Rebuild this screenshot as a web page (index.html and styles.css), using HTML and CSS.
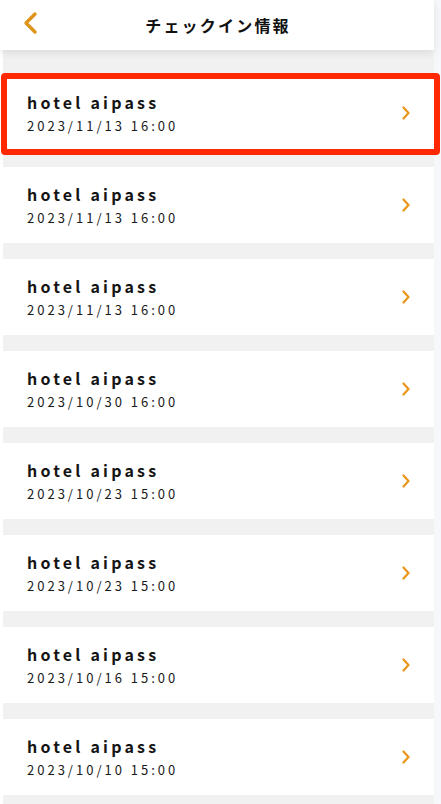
FILE: index.html
```html
<!DOCTYPE html>
<html lang="ja">
<head>
<meta charset="utf-8">
<title>チェックイン情報</title>
<link rel="stylesheet" href="styles.css">
</head>
<body>
<div class="app">
  <header class="header">
    <a class="back" aria-label="戻る">
      <svg width="16" height="24" viewBox="0 0 16 24"><path d="M13 3 L4 12 L13 21" fill="none" stroke="#de9419" stroke-width="3.4" stroke-linecap="round" stroke-linejoin="round"/></svg>
    </a>
    <h1 class="title">チェックイン情報</h1>
  </header>
  <main class="list">
    <div class="card selected">
      <div class="info"><div class="name">hotel aipass</div><div class="date">2023/11/13 16:00</div></div>
      <svg class="chev" width="10" height="14" viewBox="0 0 10 14"><path d="M2.5 1.5 L7.5 7 L2.5 12.5" fill="none" stroke="#e8961a" stroke-width="2.2" stroke-linecap="round" stroke-linejoin="round"/></svg>
      <span class="highlight"></span>
    </div>
    <div class="card">
      <div class="info"><div class="name">hotel aipass</div><div class="date">2023/11/13 16:00</div></div>
      <svg class="chev" width="10" height="14" viewBox="0 0 10 14"><path d="M2.5 1.5 L7.5 7 L2.5 12.5" fill="none" stroke="#e8961a" stroke-width="2.2" stroke-linecap="round" stroke-linejoin="round"/></svg>
    </div>
    <div class="card">
      <div class="info"><div class="name">hotel aipass</div><div class="date">2023/11/13 16:00</div></div>
      <svg class="chev" width="10" height="14" viewBox="0 0 10 14"><path d="M2.5 1.5 L7.5 7 L2.5 12.5" fill="none" stroke="#e8961a" stroke-width="2.2" stroke-linecap="round" stroke-linejoin="round"/></svg>
    </div>
    <div class="card">
      <div class="info"><div class="name">hotel aipass</div><div class="date">2023/10/30 16:00</div></div>
      <svg class="chev" width="10" height="14" viewBox="0 0 10 14"><path d="M2.5 1.5 L7.5 7 L2.5 12.5" fill="none" stroke="#e8961a" stroke-width="2.2" stroke-linecap="round" stroke-linejoin="round"/></svg>
    </div>
    <div class="card">
      <div class="info"><div class="name">hotel aipass</div><div class="date">2023/10/23 15:00</div></div>
      <svg class="chev" width="10" height="14" viewBox="0 0 10 14"><path d="M2.5 1.5 L7.5 7 L2.5 12.5" fill="none" stroke="#e8961a" stroke-width="2.2" stroke-linecap="round" stroke-linejoin="round"/></svg>
    </div>
    <div class="card">
      <div class="info"><div class="name">hotel aipass</div><div class="date">2023/10/23 15:00</div></div>
      <svg class="chev" width="10" height="14" viewBox="0 0 10 14"><path d="M2.5 1.5 L7.5 7 L2.5 12.5" fill="none" stroke="#e8961a" stroke-width="2.2" stroke-linecap="round" stroke-linejoin="round"/></svg>
    </div>
    <div class="card">
      <div class="info"><div class="name">hotel aipass</div><div class="date">2023/10/16 15:00</div></div>
      <svg class="chev" width="10" height="14" viewBox="0 0 10 14"><path d="M2.5 1.5 L7.5 7 L2.5 12.5" fill="none" stroke="#e8961a" stroke-width="2.2" stroke-linecap="round" stroke-linejoin="round"/></svg>
    </div>
    <div class="card">
      <div class="info"><div class="name">hotel aipass</div><div class="date">2023/10/10 15:00</div></div>
      <svg class="chev" width="10" height="14" viewBox="0 0 10 14"><path d="M2.5 1.5 L7.5 7 L2.5 12.5" fill="none" stroke="#e8961a" stroke-width="2.2" stroke-linecap="round" stroke-linejoin="round"/></svg>
    </div>
  </main>
</div>
</body>
</html>
```
FILE: styles.css
```css
html, body {
  margin: 0;
  padding: 0;
  background: #f6f7fb;
  font-family: "Noto Sans CJK JP", "Noto Sans", "Liberation Sans", sans-serif;
  color: #111;
}
body {
  height: 804px;
  overflow: hidden;
}
.app {
  width: 434px;
  min-height: 804px;
  background: #fff;
}
.header {
  position: relative;
  z-index: 2;
  height: 50px;
  background: #fff;
  box-shadow: 0 3px 8px rgba(0, 0, 0, 0.09);
  display: flex;
  align-items: center;
  justify-content: center;
}
.back {
  position: absolute;
  left: 22px;
  top: 11px;
  display: block;
  line-height: 0;
}
.title {
  margin: 0;
  font-size: 16px;
  font-weight: 700;
  letter-spacing: 2.2px;
  line-height: 1;
  padding-left: 2px;
}
.list {
  margin-left: 3px;
  width: 430.5px;
  background: #f1f1f1;
  padding: 25px 0 16px;
  display: flex;
  flex-direction: column;
  gap: 16px;
  min-height: 754px;
  box-sizing: border-box;
}
.card {
  position: relative;
  height: 76px;
  background: #fff;
  display: flex;
  align-items: center;
  justify-content: space-between;
  padding: 0 23px 0 24px;
  box-sizing: border-box;
}
.info {
  display: flex;
  flex-direction: column;
  padding-top: 1px;
}
.name {
  font-size: 16px;
  font-weight: 700;
  letter-spacing: 0.2em;
  line-height: 20px;
  color: #151515;
}
.date {
  font-size: 13px;
  letter-spacing: 3px;
  line-height: 18px;
  margin-top: 5px;
  color: #1a1a1a;
}
.chev {
  display: block;
}
.highlight {
  position: absolute;
  z-index: 3;
  top: -2px;
  left: -2px;
  right: -6px;
  bottom: -4px;
  border: 6px solid #ff2800;
  border-radius: 4px;
  pointer-events: none;
}
```
